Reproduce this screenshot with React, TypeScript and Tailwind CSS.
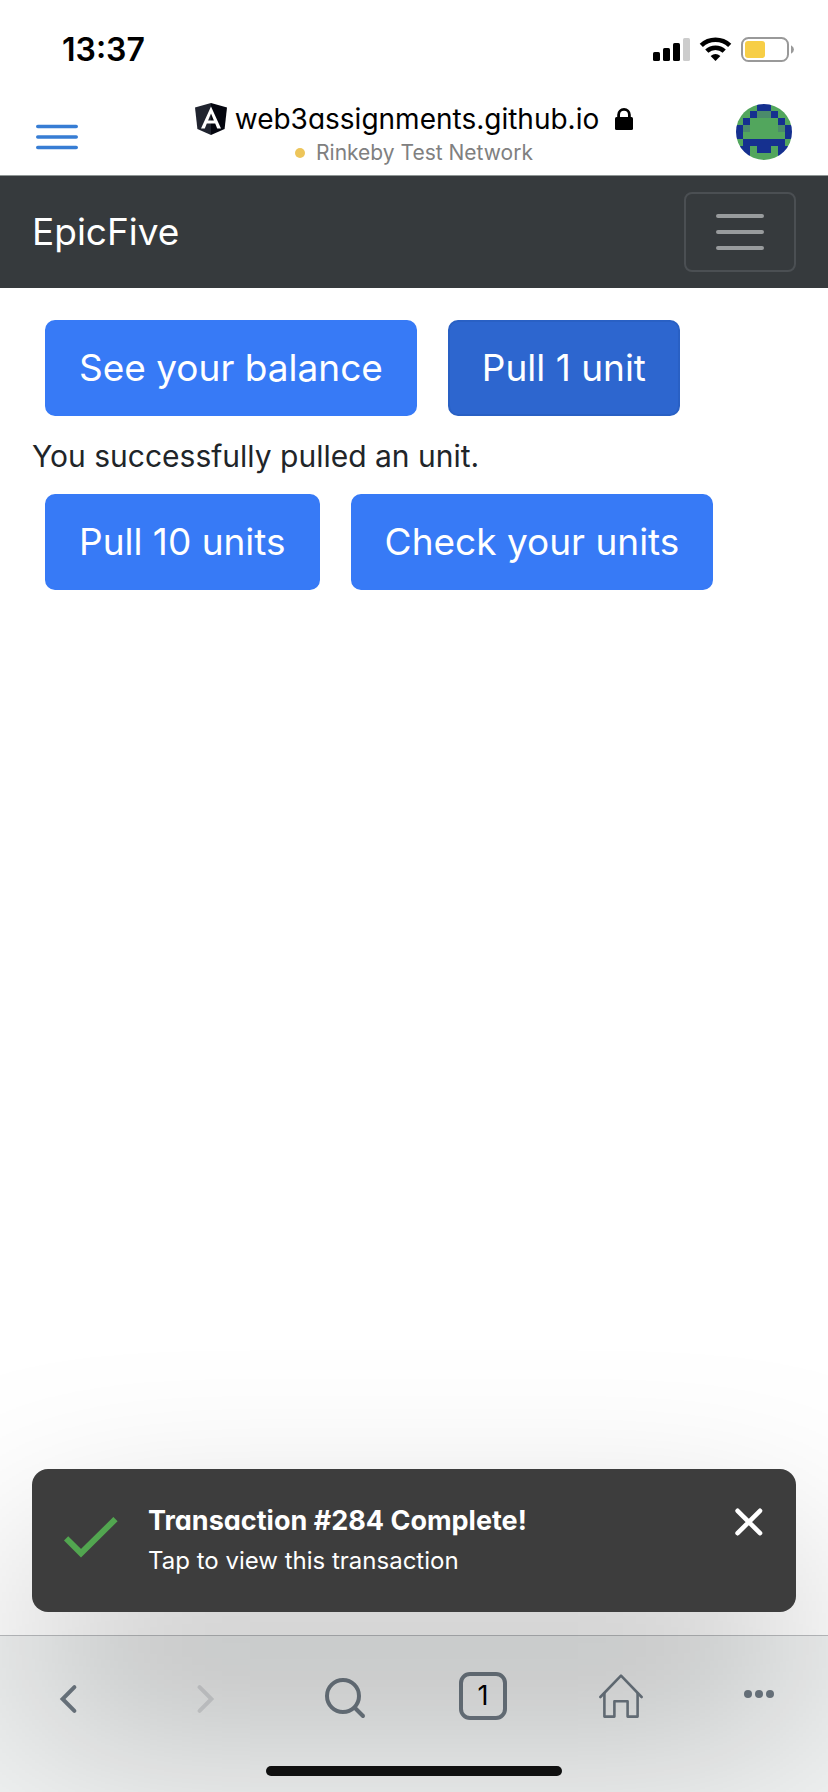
import React from "react";

const avatarRows = [
  "gggbbggg",
  "ggbttbgg",
  "gbggggbg",
  "btggggtb",
  "bggggggb",
  "gbbbbbbg",
  "bbgbbgbb",
  "bbggggbb",
];

const avatarColors: Record<string, string> = { g: "#52a65d", b: "#15308f", t: "#4b8b6b" };

function Avatar() {
  return (
    <svg viewBox="0 0 8 8" className="size-14 rounded-full" shapeRendering="crispEdges" aria-hidden="true">
      {avatarRows.flatMap((row, y) =>
        row.split("").map((c, x) => (
          <rect key={`${x}-${y}`} x={x} y={y} width="1" height="1" fill={avatarColors[c]} />
        )),
      )}
    </svg>
  );
}

function StatusIcons() {
  return (
    <svg width="142" height="26" viewBox="0 0 142 26" aria-hidden="true">
      <rect x="0" y="15" width="7" height="9" rx="1.6" />
      <rect x="10" y="11" width="7" height="13" rx="1.6" />
      <rect x="20" y="6" width="7" height="18" rx="1.6" />
      <rect x="30" y="1" width="7" height="23" rx="1.6" fill="#cccccc" />
      <g fill="none" stroke="#000" strokeWidth="4.6">
        <path d="M48.3 8.4A20.5 20.5 0 0 1 76.7 8.4" />
        <path d="M53.8 14.2A12.6 12.6 0 0 1 71.2 14.2" />
      </g>
      <path d="M62.5 24L57.6 19Q62.5 15.2 67.4 19Z" />
      <rect x="89" y="1" width="46" height="23" rx="6.5" fill="none" stroke="#999999" strokeWidth="2" />
      <rect x="92" y="4" width="20" height="17" rx="3" fill="#f7ce46" />
      <path d="M138 8.3Q141 10 141 12.5T138 16.8Z" fill="#999999" />
    </svg>
  );
}

function AngularLogo() {
  return (
    <svg width="32" height="32" viewBox="0 0 32 32" aria-hidden="true">
      <path d="M16 0L0 4.6L2.4 26L16 32Z" fill="#20242f" />
      <path d="M16 0L32 4.6L29.6 26L16 32Z" fill="#04060f" />
      <path
        fill="#fff"
        fillRule="evenodd"
        d="M16 3.4L6 25.4H9.8L11.8 20.4H20.2L22.2 25.4H26ZM16 10.6L18.9 17.4H13.1Z"
      />
    </svg>
  );
}

function ActionButton({ children, active }: { children: React.ReactNode; active?: boolean }) {
  return (
    <button
      type="button"
      className={
        active
          ? "h-24 rounded-[10px] border-2 border-[#2960c4] bg-[#2d66cf] px-8 text-[37px] text-white"
          : "h-24 rounded-[10px] border-2 border-[#377af6] bg-[#377af6] px-8 text-[37px] text-white"
      }
    >
      {children}
    </button>
  );
}

function ToolbarButton({ label, disabled, children }: { label: string; disabled?: boolean; children: React.ReactNode }) {
  return (
    <button
      type="button"
      aria-label={label}
      disabled={disabled}
      className={disabled ? "flex h-[120px] items-center justify-center text-[#d5d7d9]" : "flex h-[120px] items-center justify-center text-[#6f7a84]"}
    >
      {children}
    </button>
  );
}

export default function App() {
  return (
    <div className="flex min-h-screen flex-col bg-white font-['Inter',sans-serif] text-black">
      <div className="flex h-[88px] items-center justify-between pt-3 pr-[33px] pl-[62px]">
        <span className="text-[32px] leading-10 font-semibold">13:37</span>
        <StatusIcons />
      </div>

      <header className="grid h-[88px] grid-cols-[1fr_auto_1fr] items-center border-b border-[#8e9594] px-9">
        <button type="button" aria-label="Open menu" className="justify-self-start pt-2.5">
          <svg width="42" height="26" viewBox="0 0 42 26" stroke="#377dd4" strokeWidth="3.6" strokeLinecap="round" aria-hidden="true">
            <path d="M1.8 2.5H40.2M1.8 13H40.2M1.8 23.5H40.2" />
          </svg>
        </button>
        <div className="flex flex-col items-center pt-1.5">
          <div className="flex items-center gap-2">
            <AngularLogo />
            <span className="text-[28px] leading-9 [font-feature-settings:'cv11']">web3assignments.github.io</span>
            <svg width="18" height="22" viewBox="0 0 18 22" className="ml-2" aria-hidden="true">
              <rect x="0" y="9" width="18" height="13" rx="1.5" />
              <path d="M3.6 11V6.8a5.4 5.4 0 0 1 10.8 0V11" fill="none" stroke="#000" strokeWidth="2.8" />
            </svg>
          </div>
          <div className="flex items-center gap-[11px]">
            <span className="size-2.5 rounded-full bg-[#edc55a]" />
            <span className="text-[21px] leading-8 text-[#808080] [font-feature-settings:'cv11']">Rinkeby Test Network</span>
          </div>
        </div>
        <button type="button" aria-label="Account" className="justify-self-end">
          <Avatar />
        </button>
      </header>

      <nav className="flex h-28 items-center justify-between bg-[#363a3d] px-8">
        <a href="#" className="text-[37px] text-white">EpicFive</a>
        <button
          type="button"
          aria-label="Toggle navigation"
          className="flex h-20 w-28 items-center justify-center rounded-lg border-2 border-[#4b4f53]"
        >
          <svg width="48" height="36" viewBox="0 0 48 36" stroke="#989b9d" strokeWidth="4" strokeLinecap="round" aria-hidden="true">
            <path d="M2 2H46M2 18H46M2 34H46" />
          </svg>
        </button>
      </nav>

      <main className="flex flex-1 flex-col px-8 pt-8">
        <div className="flex gap-[31px] pl-[13px]">
          <ActionButton>See your balance</ActionButton>
          <ActionButton active>Pull 1 unit</ActionButton>
        </div>
        <p className="pt-4 pb-[14px] text-[30px] leading-[48px] text-[#212529]">You successfully pulled an unit.</p>
        <div className="flex gap-[31px] pl-[13px]">
          <ActionButton>Pull 10 units</ActionButton>
          <ActionButton>Check your units</ActionButton>
        </div>
      </main>

      <section role="status" className="relative z-10 mx-8 mb-[23px]">
        <div className="pointer-events-none absolute inset-0 translate-y-[100px] bg-black/30 blur-[100px]" />
        <div className="relative flex h-[143px] items-start rounded-2xl bg-[#3d3d3d] px-8 text-white">
          <svg width="54" height="42" viewBox="0 0 54 42" className="mt-12" fill="none" stroke="#52a650" strokeWidth="6" aria-hidden="true">
            <path d="M2.1 21.3L17 36.2L51.5 2.1" />
          </svg>
          <div className="ml-[30px] flex-1 pt-8">
            <p className="text-[27px] leading-10 font-bold [font-feature-settings:'cv11']">Transaction #284 Complete!</p>
            <p className="text-[24px] leading-10">Tap to view this transaction</p>
          </div>
          <button type="button" aria-label="Close" className="mt-[39px]">
            <svg width="30" height="28" viewBox="0 0 30 28" stroke="#fff" strokeWidth="4.6" strokeLinecap="round" aria-hidden="true">
              <path d="M3.6 2.8L26 25.2M26 2.8L3.6 25.2" />
            </svg>
          </button>
        </div>
      </section>

      <footer className="border-t border-[#bcbec1] bg-[#f1f3f3] pb-4">
        <div className="grid h-[130px] grid-cols-6">
          <ToolbarButton label="Back">
            <svg width="20" height="30" viewBox="0 0 20 30" className="mt-1.5" fill="none" stroke="currentColor" strokeWidth="4" strokeLinecap="round" aria-hidden="true">
              <path d="M15.4 3.2L3.6 15L15.4 26.8" />
            </svg>
          </ToolbarButton>
          <ToolbarButton label="Forward" disabled>
            <svg width="20" height="30" viewBox="0 0 20 30" className="mt-1.5" fill="none" stroke="currentColor" strokeWidth="4" strokeLinecap="round" aria-hidden="true">
              <path d="M2.6 3.2L14.4 15L2.6 26.8" />
            </svg>
          </ToolbarButton>
          <ToolbarButton label="Search">
            <svg width="42" height="42" viewBox="0 0 42 42" fill="none" stroke="currentColor" strokeWidth="4" strokeLinecap="round" className="mt-1" aria-hidden="true">
              <circle cx="19" cy="19" r="16" />
              <path d="M31 31L39 39" />
            </svg>
          </ToolbarButton>
          <ToolbarButton label="Tabs">
            <span className="flex size-12 items-center justify-center rounded-[11px] border-4 border-[#6f7a84] text-[27px] leading-8 text-black">1</span>
          </ToolbarButton>
          <ToolbarButton label="Home">
            <svg width="44" height="44" viewBox="0 0 44 44" fill="none" stroke="currentColor" strokeWidth="2.6" strokeLinecap="round" strokeLinejoin="round" aria-hidden="true">
              <path d="M1.4 23L22 1.6L42.6 23" />
              <path d="M5.4 19.5V42.6H15.4V27.2H28.6V42.6H38.6V19.5" />
            </svg>
          </ToolbarButton>
          <ToolbarButton label="More">
            <svg width="30" height="8" viewBox="0 0 30 8" className="mb-1" fill="currentColor" aria-hidden="true">
              <circle cx="4" cy="4" r="4" />
              <circle cx="15" cy="4" r="4" />
              <circle cx="26" cy="4" r="4" />
            </svg>
          </ToolbarButton>
        </div>
        <div className="relative z-20 mx-auto h-2.5 w-[296px] rounded-full bg-[#101010]" />
      </footer>
    </div>
  );
}
